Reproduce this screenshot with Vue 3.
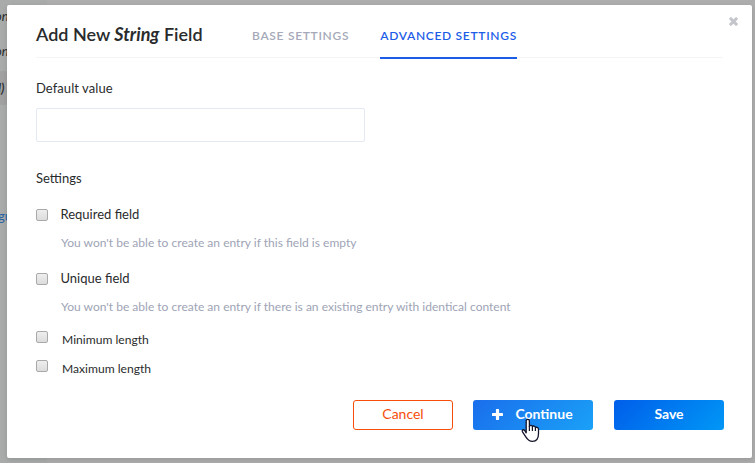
<script setup>
import { ref } from 'vue'

const tabs = ['Base settings', 'Advanced settings']
const active = ref(1)
const defaultValue = ref('')
const options = [
  { label: 'Required field', help: "You won't be able to create an entry if this field is empty" },
  { label: 'Unique field', help: "You won't be able to create an entry if there is an existing entry with identical content" },
  { label: 'Minimum length' },
  { label: 'Maximum length' },
]
</script>

<template>
  <div class="page">
    <div class="backdrop">
      <div class="side">
        <span class="side-item">on</span>
        <span class="side-item">on</span>
        <span class="side-item selected">l)</span>
        <span class="side-link">gu</span>
      </div>
    </div>
    <section class="modal">
      <button class="close" aria-label="Close">
        <svg width="9" height="9" viewBox="0 0 9 9"><path d="M1.9 1.9 7.1 7.1M7.1 1.9 1.9 7.1" stroke="#c3c5cb" stroke-width="2.9" stroke-linecap="square" fill="none" /></svg>
      </button>
      <header class="head">
        <h1 class="title">Add New <em>String</em> Field</h1>
        <nav class="tabs">
          <a v-for="(tab, i) in tabs" :key="tab" class="tab" :class="{ active: i === active }" @click="active = i">{{ tab }}</a>
        </nav>
      </header>
      <label class="label" for="default-value">Default value</label>
      <input id="default-value" v-model="defaultValue" class="field" type="text" />
      <h2 class="label settings">Settings</h2>
      <div v-for="o in options" :key="o.label" class="option" :class="{ compact: !o.help }">
        <span class="check"></span>
        <div class="copy">
          <div class="name">{{ o.label }}</div>
          <p v-if="o.help" class="help">{{ o.help }}</p>
        </div>
      </div>
      <footer class="actions">
        <button class="btn cancel">Cancel</button>
        <button class="btn primary continue">
          <svg class="plus" width="11" height="11" viewBox="0 0 11 11"><path d="M5.5 1.2V9.8M1.2 5.5H9.8" stroke="#fff" stroke-width="3.2" stroke-linecap="round" /></svg>
          <span>Continue</span>
        </button>
        <button class="btn primary save">Save</button>
      </footer>
    </section>
    <svg class="cursor" width="20" height="25" viewBox="0 0 20 25">
      <path d="M5.2 14.8V3C5.2.7 8.4.7 8.4 3V8.5C8.8 6.8 11.4 7 11.4 8.8 12 7.5 14.4 7.9 14.4 9.8 15.2 8.8 17.5 9.2 17.5 11.2V15.5C17.5 20.5 15.8 23.3 11.5 23.3 7.8 23.3 6.3 21.3 4.8 18.8L1.5 13.8C.5 12 2.4 11 3.8 12.6Z" fill="#fff" stroke="#15152b" stroke-width="1.3" stroke-linejoin="round" />
      <path d="M8.4 8V13M11.4 9V13M14.4 10V13" fill="none" stroke="#15152b" stroke-width="1.2" />
    </svg>
  </div>
</template>

<style>
body {
  overflow: hidden;
}
</style>

<style scoped>
* {
  box-sizing: border-box;
}
.page {
  position: relative;
  width: 755px;
  height: 463px;
  padding: 5px 3px 5px 7px;
  background: #adadad;
  font-family: Lato, "Liberation Sans", sans-serif;
  color: #292b2c;
}
.backdrop {
  position: absolute;
  inset: 0;
}
.side {
  width: 47px;
  height: 463px;
  background: #a9abaa;
  font-size: 13px;
}
.side-item {
  display: block;
  height: 36px;
  margin-left: -5px;
  line-height: 32px;
  font-style: italic;
  color: #292b2d;
}
.side-item:first-child {
  height: 35px;
}
.side-item.selected {
  height: 34px;
  margin: 0;
  background: #a1a1a1;
  line-height: 34px;
  font-weight: 600;
  text-indent: -2px;
}
.side-link {
  display: block;
  margin: 101px 0 0 -2px;
  line-height: 20px;
  color: #2861a5;
}
.modal {
  position: relative;
  width: 745px;
  height: 453px;
  padding: 0 29px;
  border-radius: 2px;
  background: #fff;
  box-shadow: 0 2px 5px rgba(0, 0, 0, 0.12);
}
.close {
  position: absolute;
  top: 12px;
  right: 14px;
  display: flex;
  padding: 0;
  border: 0;
  background: none;
}
.head {
  display: flex;
  width: 687px;
  height: 53px;
  border-bottom: 1px solid #f5f5f6;
}
.title {
  width: 216px;
  margin: 0;
  font-size: 18px;
  font-weight: 600;
  line-height: 58px;
  white-space: nowrap;
}
.title em {
  font-weight: 700;
}
.tabs {
  display: flex;
  gap: 31px;
}
.tab {
  height: 54px;
  font-size: 12px;
  font-weight: 600;
  line-height: 61px;
  letter-spacing: 0.7px;
  text-transform: uppercase;
  white-space: nowrap;
  color: #a5a9b8;
}
.tab.active {
  border-bottom: 2px solid #1c5de7;
  color: #1c5de7;
}
.label {
  display: block;
  margin: 21px 0 0;
  font-size: 13px;
  font-weight: 400;
  line-height: 18px;
  letter-spacing: 0.07px;
}
.field {
  display: block;
  width: 329px;
  height: 34px;
  margin-top: 11px;
  border: 1px solid #e3e9f3;
  border-radius: 2px;
  outline: 0;
}
.settings {
  margin: 27px 0 18px;
  letter-spacing: 0;
}
.option {
  display: flex;
  height: 64px;
}
.check {
  width: 12px;
  height: 12px;
  margin: 4px 13px 0 0;
  border: 1px solid #a9a9a9;
  border-radius: 2px;
  background: linear-gradient(#eee, #dcdcdc);
}
.name {
  margin-left: -0.5px;
  font-size: 13px;
  font-weight: 400;
  line-height: 18px;
}
.help {
  margin: 11px 0 0;
  font-size: 12.04px;
  font-weight: 400;
  line-height: 17px;
  color: #9ea4b6;
}
.option.compact {
  height: 29px;
}
.compact .check {
  margin: -2px 14px 0 0;
}
.compact .name {
  margin: -2px 0 0;
  font-size: 12.1px;
}
.actions {
  display: flex;
  width: 688px;
  justify-content: flex-end;
  margin-top: 9px;
}
.btn {
  display: flex;
  align-items: center;
  justify-content: center;
  height: 30px;
  padding: 0 0 2px;
  border: 0;
  border-radius: 3px;
  font: 400 14px/18px Lato, sans-serif;
}
.cancel {
  width: 100px;
  border: 1px solid #f64d0a;
  background: #fff;
  color: #f64d0a;
}
.primary {
  background: linear-gradient(315deg, #0097f6, #005eea);
  color: #fff;
  font-weight: 700;
}
.continue {
  width: 120px;
  margin: 0 21px 0 20px;
  padding-right: 1px;
  gap: 12px;
  background: linear-gradient(315deg, #1aa1f7, #1a6eec);
}
.save {
  width: 110px;
}
.cursor {
  position: absolute;
  left: 521px;
  top: 418px;
}
</style>
